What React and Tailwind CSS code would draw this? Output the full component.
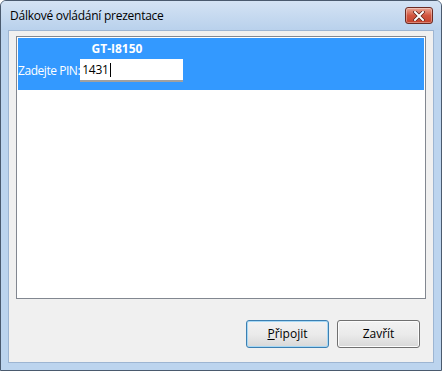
import React from "react";

const CloseButton = () => (
  <div className="w-[28px] h-[17px] rounded-[3px] border border-[#6b2a22] bg-gradient-to-b from-[#e8a493] via-[#d2553f] to-[#c4412b] flex items-center justify-center shadow-[inset_0_0_0_1px_rgba(255,255,255,0.35)]">
    <svg width="12" height="10" viewBox="0 0 12 10">
      <path d="M2 1 L10 9 M10 1 L2 9" stroke="#5a2019" strokeWidth="3.4" strokeLinecap="square" />
      <path d="M2 1 L10 9 M10 1 L2 9" stroke="#ffffff" strokeWidth="2" strokeLinecap="square" />
    </svg>
  </div>
);

const Button = ({ children, focused }) => (
  <button
    className={`w-[83px] h-[28px] rounded-[3px] border text-[12px] text-black bg-gradient-to-b from-[#f2f2f2] via-[#ebebeb] to-[#d8d8d8] ${
      focused ? "border-[#3c7fb1] shadow-[inset_0_0_0_1px_#a6d8f5]" : "border-[#707070] shadow-[inset_0_0_0_1px_#fcfcfc]"
    }`}
  >
    {children}
  </button>
);

export default function App() {
  return (
    <div
      className="w-[442px] h-[371px] bg-[#bcd4ee] border border-[#4a5a6e] rounded-t-[6px] flex flex-col overflow-hidden"
      style={{ fontFamily: '"Open Sans", "Noto Sans", sans-serif' }}
    >
      {/* Title bar */}
      <div className="h-[29px] shrink-0 flex items-center justify-between pl-[9px] pr-[8px] bg-gradient-to-b from-[#d4e3f4] to-[#b9d1ec]">
        <span className="text-[12px] text-black tracking-[-0.25px]">Dálkové ovládání prezentace</span>
        <CloseButton />
      </div>

      {/* Client area */}
      <div className="flex-1 mx-[7px] mb-[7px] bg-[#f0f0f0] border border-[#9db5d2] flex flex-col pl-[7px] pr-[7px] pt-[5px]">
        <div className="h-[263px] bg-white border border-[#828790] p-px">
          <div className="h-[52px] bg-[#3399ff] flex flex-col text-white">
            <div className="text-[12px] font-bold text-center w-[198px] leading-[16px] pt-[3px]">GT-I8150</div>
            <div className="flex items-center mt-[2px]">
              <span className="text-[12px] leading-none tracking-[-0.45px]">Zadejte PIN:</span>
              <div className="w-[103px] h-[23px] bg-white border-b-2 border-[#a0a0a0] flex items-center pl-[2px]">
                <span className="text-[12px] text-black leading-none tracking-[-0.2px]">1431</span>
                <span className="w-px h-[14px] bg-black ml-px" />
              </div>
            </div>
          </div>
        </div>
        <div className="flex justify-end gap-[8px] mt-[21px] pr-[6px]">
          <Button focused>
            <span className="underline">P</span>řipojit
          </Button>
          <Button>Zavřít</Button>
        </div>
      </div>
    </div>
  );
}
